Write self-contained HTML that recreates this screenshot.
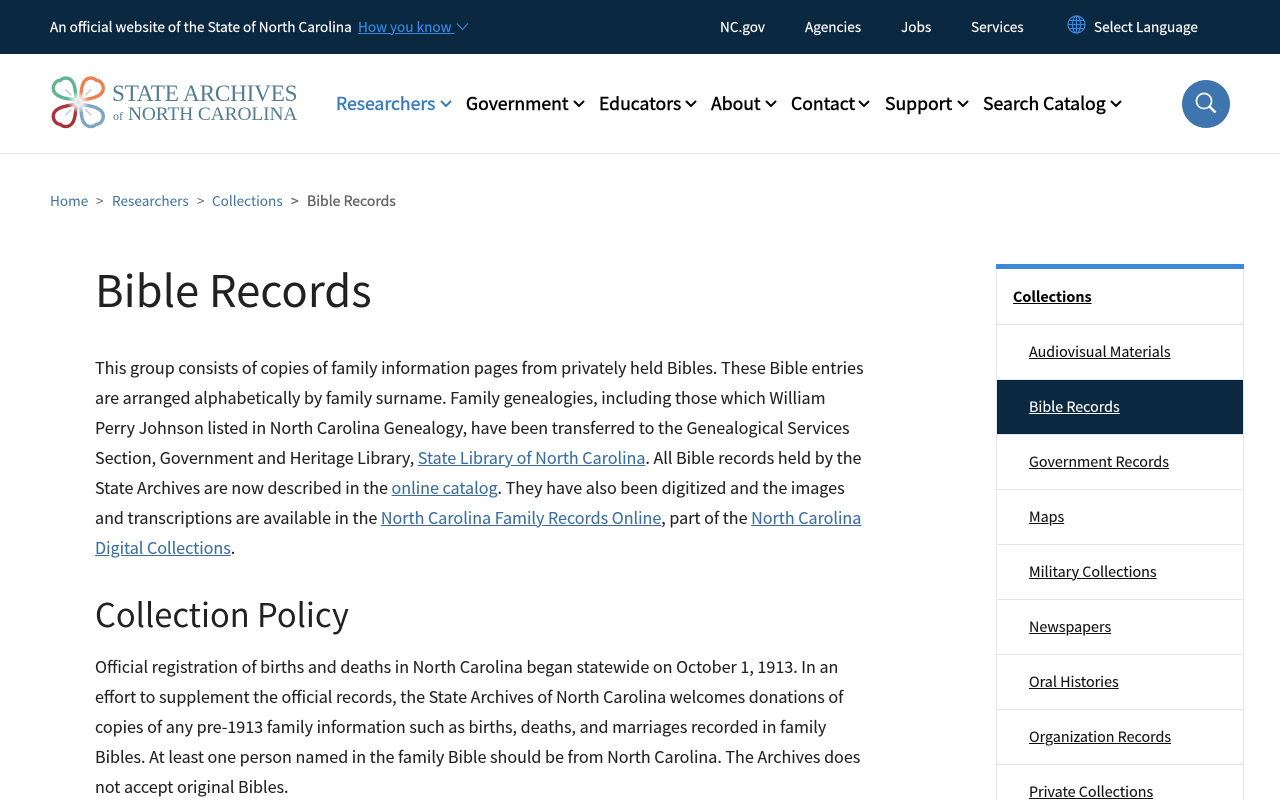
<!DOCTYPE html>
<html lang="en">
<head>
<meta charset="utf-8">
<title>Bible Records</title>
<style>
html,body{margin:0;padding:0;width:1280px;height:800px;overflow:hidden;background:#fff}
body{position:relative;font-family:"Noto Sans CJK JP","Liberation Sans",sans-serif;color:#212121}
.t{position:absolute;white-space:nowrap;line-height:30px;height:30px}
a{color:inherit}
.p{font-size:16.12px;color:#212121;-webkit-text-stroke:.1px currentColor}
.p a{color:#3d6d9e}
.top{font-size:13.6px;color:#fff;-webkit-text-stroke:.15px currentColor}
.nav{font-size:17.6px;color:#000;-webkit-text-stroke:.45px currentColor}
.bc{font-size:13.6px;color:#41719f}
.sep{font-size:13.6px;color:#666}
.side{font-size:14.3px;color:#111;text-decoration:underline;-webkit-text-stroke:.1px currentColor}
.row{position:absolute;left:997px;width:246px;height:54px;border-bottom:1px solid #e3e6ea;background:#fff}
</style>
</head>
<body>
<div style="position:absolute;left:0;top:0;width:1280px;height:54px;background:#0b2841"></div>
<div class="t top" style="left:50px;top:11px">An official website of the State of North Carolina</div>
<div class="t top" style="left:358px;top:11px;color:#3b86dc"><a style="text-decoration:underline">How you know&nbsp;</a></div>
<svg style="position:absolute;left:456px;top:22px" width="13" height="9" viewBox="0 0 13 9"><path d="M1 1.500l5.500 6 5.500-6" fill="none" stroke="#3b86dc" stroke-width="1.100"/></svg>
<div class="t top" style="left:720px;top:11px">NC.gov</div>
<div class="t top" style="left:805px;top:11px">Agencies</div>
<div class="t top" style="left:901px;top:11px">Jobs</div>
<div class="t top" style="left:971px;top:11px">Services</div>
<svg style="position:absolute;left:1067px;top:15px" width="19" height="19" viewBox="0 0 19 19" fill="none" stroke="#3b86dc" stroke-width="1.200"><circle cx="9.500" cy="9.500" r="8.500"/><ellipse cx="9.500" cy="9.500" rx="4" ry="8.500"/><path d="M9.500 1v17M1 9.500h17M2.200 5.500h14.600M2.200 13.500h14.600"/></svg>
<div class="t top" style="left:1094px;top:11px">Select Language</div>

<div style="position:absolute;left:0;top:153px;width:1280px;height:1px;background:#e3e5e8"></div>

<svg style="position:absolute;left:50px;top:74px" width="58" height="58" viewBox="0 0 58 58" fill="none" stroke-width="3.400">
<defs><radialGradient id="g"><stop offset="0" stop-color="#d9dddf"/><stop offset=".3" stop-color="#f2f3f4"/><stop offset="1" stop-color="#fff" stop-opacity="0"/></radialGradient></defs>
<g transform="translate(28.300 28.300)">
<path d="M-2-2C-3-11-3-18-7-22C-10-25-15-25-18-22C-22-22-25-18-25-14C-25-9-20-6-15-4.500C-10-3-6-2.500-2-2Z" stroke="#62b592"/>
<path d="M-2-2C-3-11-3-18-7-22C-10-25-15-25-18-22C-22-22-25-18-25-14C-25-9-20-6-15-4.500C-10-3-6-2.500-2-2Z" stroke="#e98250" transform="scale(-1 1)"/>
<path d="M-2-2C-3-11-3-18-7-22C-10-25-15-25-18-22C-22-22-25-18-25-14C-25-9-20-6-15-4.500C-10-3-6-2.500-2-2Z" stroke="#a8343a" transform="scale(1 -1)"/>
<path d="M-2-2C-3-11-3-18-7-22C-10-25-15-25-18-22C-22-22-25-18-25-14C-25-9-20-6-15-4.500C-10-3-6-2.500-2-2Z" stroke="#7ea6c0" transform="scale(-1 -1)"/>
<path d="M-13-13l6 6M13-13l-6 6M-13 13l6-6M13 13l-6-6" stroke="#c9ced2" stroke-width="1.500"/>
<circle r="11" fill="url(#g)"/>
</g>
</svg>
<div style="position:absolute;left:112px;top:81px;font:23.200px/26px 'Liberation Serif',serif;color:#527d8f;white-space:nowrap;letter-spacing:-.2px">STATE ARCHIVES</div>
<div style="position:absolute;left:113px;top:104px;font:12px/24px 'Liberation Serif',serif;color:#527d8f;white-space:nowrap">of</div>
<div style="position:absolute;left:128px;top:103px;font:19.400px/24px 'Liberation Serif',serif;color:#527d8f;white-space:nowrap;letter-spacing:-.1px">NORTH CAROLINA</div>

<div class="t nav" style="left:336px;top:89px;color:#3a7dbd">Researchers</div>
<div class="t nav" style="left:466px;top:89px">Government</div>
<div class="t nav" style="left:599px;top:89px">Educators</div>
<div class="t nav" style="left:711px;top:89px">About</div>
<div class="t nav" style="left:791px;top:89px">Contact</div>
<div class="t nav" style="left:885px;top:89px">Support</div>
<div class="t nav" style="left:983px;top:89px">Search Catalog</div>
<svg style="position:absolute;left:0;top:0" width="1280" height="150" fill="none" stroke="#000" stroke-width="2"><path stroke="#3a7dbd" d="M441 101l5 5 5-5"/><path d="M574 101l5 5 5-5M686 101l5 5 5-5M766 101l5 5 5-5M859 101l5 5 5-5M958 101l5 5 5-5M1111 101l5 5 5-5"/></svg>

<div style="position:absolute;left:1182px;top:80px;width:48px;height:48px;border-radius:50%;background:#3f75ae"></div>
<svg style="position:absolute;left:1194px;top:91px" width="24" height="24" viewBox="0 0 24 24" fill="none" stroke="#fff"><circle cx="10" cy="10" r="7.500" stroke-width="1.700"/><path d="M15.500 15.500l6 6" stroke-width="2.600"/></svg>

<div class="t bc" style="left:50px;top:185px">Home</div>
<div class="t sep" style="left:96px;top:185px">&gt;</div>
<div class="t bc" style="left:112px;top:185px">Researchers</div>
<div class="t sep" style="left:197px;top:185px">&gt;</div>
<div class="t bc" style="left:212px;top:185px">Collections</div>
<div class="t sep" style="left:291px;top:185px;-webkit-text-stroke:.3px #666">&gt;</div>
<div class="t bc" style="left:307px;top:186px;font-size:14px;color:#666;-webkit-text-stroke:.35px #666">Bible Records</div>

<div class="t" style="left:95px;top:258px;font-size:43.600px;line-height:60px;height:60px;color:#212121">Bible Records</div>

<div class="t p" style="left:95px;top:352px">This group consists of copies of family information pages from privately held Bibles. These Bible entries</div>
<div class="t p" style="left:95px;top:382px">are arranged alphabetically by family surname. Family genealogies, including those which William</div>
<div class="t p" style="left:95px;top:412px">Perry Johnson listed in North Carolina Genealogy, have been transferred to the Genealogical Services</div>
<div class="t p" style="left:95px;top:442px">Section, Government and Heritage Library, <a href="#">State Library of North Carolina</a>. All Bible records held by the</div>
<div class="t p" style="left:95px;top:472px">State Archives are now described in the <a href="#">online catalog</a>. They have also been digitized and the images</div>
<div class="t p" style="left:95px;top:502px">and transcriptions are available in the <a href="#">North Carolina Family Records Online</a>, part of the <a href="#">North Carolina</a></div>
<div class="t p" style="left:95px;top:532px"><a href="#">Digital Collections</a>.</div>

<div class="t" style="left:95px;top:589px;font-size:32.700px;line-height:50px;height:50px;color:#212121">Collection Policy</div>

<div class="t p" style="left:95px;top:651px">Official registration of births and deaths in North Carolina began statewide on October 1, 1913. In an</div>
<div class="t p" style="left:95px;top:681px">effort to supplement the official records, the State Archives of North Carolina welcomes donations of</div>
<div class="t p" style="left:95px;top:711px">copies of any pre-1913 family information such as births, deaths, and marriages recorded in family</div>
<div class="t p" style="left:95px;top:741px">Bibles. At least one person named in the family Bible should be from North Carolina. The Archives does</div>
<div class="t p" style="left:95px;top:771px">not accept original Bibles.</div>

<div style="position:absolute;left:996px;top:264px;width:248px;height:536px;background:#e3e6ea"></div>
<div style="position:absolute;left:996px;top:264px;width:248px;height:5px;background:#3f8ad8"></div>
<div class="row" style="top:269px;height:55px"></div>
<div class="row" style="top:325px"></div>
<div class="row" style="top:380px;background:#0b2841"></div>
<div class="row" style="top:435px"></div>
<div class="row" style="top:490px"></div>
<div class="row" style="top:545px"></div>
<div class="row" style="top:600px"></div>
<div class="row" style="top:655px"></div>
<div class="row" style="top:710px"></div>
<div class="row" style="top:765px;height:35px;border:0"></div>
<div class="t side" style="left:1013px;top:282px;font-weight:700;color:#000">Collections</div>
<div class="t side" style="left:1029px;top:337px">Audiovisual Materials</div>
<div class="t side" style="left:1029px;top:392px;color:#fff">Bible Records</div>
<div class="t side" style="left:1029px;top:447px">Government Records</div>
<div class="t side" style="left:1029px;top:502px">Maps</div>
<div class="t side" style="left:1029px;top:557px">Military Collections</div>
<div class="t side" style="left:1029px;top:612px">Newspapers</div>
<div class="t side" style="left:1029px;top:667px">Oral Histories</div>
<div class="t side" style="left:1029px;top:722px">Organization Records</div>
<div class="t side" style="left:1029px;top:777px">Private Collections</div>
</body>
</html>
